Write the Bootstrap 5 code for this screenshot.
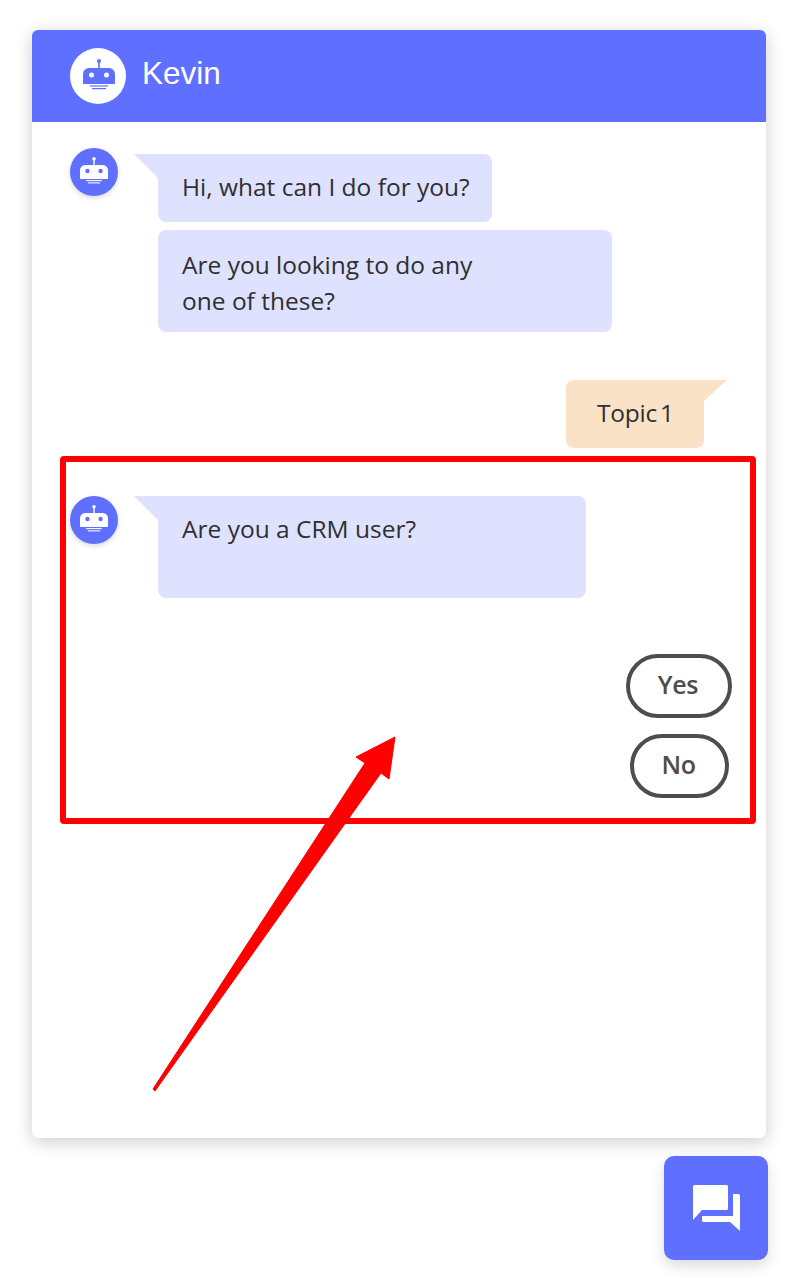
<!DOCTYPE html>
<html lang="en">
<head>
  <meta charset="UTF-8" />
  <meta name="viewport" content="width=device-width, initial-scale=1.0"/>
  <title>Kevin chat</title>
  <link href="https://cdn.jsdelivr.net/npm/bootstrap@5.3.3/dist/css/bootstrap.min.css" rel="stylesheet" />
  <style>
    body {
      background: #fff;
      font-family: "Open Sans", "Noto Sans", sans-serif;
      color: #2f2f33;
      overflow: hidden;
    }
    .page-wrap {
      position: relative;
      width: 790px;
      height: 1278px;
      padding: 30px 24px 0 32px;
    }
    .chat-card {
      height: 1108px;
      border: 0;
      border-radius: 6px;
      box-shadow: 0 4px 18px rgba(0,0,0,0.2);
    }
    .chat-head {
      height: 92px;
      background: #5f6fff;
      color: #fff;
      padding-left: 38px;
      border-radius: 6px 6px 0 0;
      font-family: "Liberation Sans", Arial, sans-serif;
      font-size: 31.5px;
      gap: 16px;
    }
    .chat-name { padding-bottom: 4px; }
    .head-avatar {
      width: 56px;
      height: 56px;
      background: #fff;
      color: #5f6fff;
    }
    .head-avatar svg { margin: 0 0 2px 2px; }
    .bot-avatar {
      width: 48px;
      height: 48px;
      background: #5f6fff;
      color: #fff;
      box-shadow: 0 2px 5px rgba(0,0,0,0.15);
      flex: none;
    }
    .bot-avatar svg { margin-bottom: 2px; }
    .chat-rows { padding-left: 38px; padding-top: 26px; }
    .bot-group { gap: 40px; }
    .msg-stack { gap: 8px; padding-top: 6px; }
    .bubble {
      position: relative;
      background: #dfe2fe;
      border-radius: 8px;
      padding: 17px 24px;
      font-size: 24.5px;
      line-height: 36px;
    }
    .bubble-hi { width: 334px; height: 68px; border-top-left-radius: 0; padding: 0 0 3px 24px; white-space: nowrap; }
    .bubble-look { width: 454px; height: 102px; }
    .bubble-crm { width: 428px; height: 102px; border-top-left-radius: 0; padding-top: 15px; }
    .bubble-tail::before {
      content: "";
      position: absolute;
      left: -24px;
      top: 0;
      border-top: 24px solid #dfe2fe;
      border-left: 24px solid transparent;
    }
    .user-row { margin-top: 48px; padding-right: 62px; }
    .bubble-user {
      width: 138px;
      height: 68px;
      background: #f9e2c6;
      border-top-right-radius: 0;
      text-align: center;
      padding: 15px 0 15px 1px;
      letter-spacing: -0.25px;
      word-spacing: -3px;
    }
    .bubble-user::after {
      content: "";
      position: absolute;
      right: -23px;
      top: 0;
      border-top: 21px solid #f9e2c6;
      border-right: 23px solid transparent;
    }
    .red-box {
      margin: 8px 10px 0 28px;
      height: 368px;
      border: 6px solid #ff0000;
      border-radius: 4px;
      padding: 34px 0 0 4px;
    }
    .reply-list { margin-top: 56px; gap: 16px; padding-right: 18px; }
    .reply-btn {
      height: 64px;
      border: 4px solid #4d4d4d;
      border-radius: 32px;
      background: #fff;
      color: #4d4d4d;
      font-size: 25px;
      font-weight: 600;
      line-height: 1;
      padding: 0 2px 4px 0;
      letter-spacing: -0.3px;
    }
    .reply-yes { width: 106px; }
    .reply-no { width: 99px; margin-right: 3px; }
    .fab-row { margin-top: 18px; }
    .fab {
      width: 104px;
      height: 104px;
      margin-right: -2px;
      background: #5f6fff;
      color: #fff;
      border: 0;
      border-radius: 10px;
      box-shadow: 0 6px 14px rgba(0,0,0,0.14);
    }
    .fab:hover { background: #5f6fff; color: #fff; }
    .note-arrow {
      position: absolute;
      left: 0;
      top: 0;
      pointer-events: none;
    }
  </style>
</head>
<body>
  <svg width="0" height="0" class="d-block position-absolute">
    <symbol id="botIcon" viewBox="0 0 32 32">
      <circle cx="16" cy="2" r="2"/>
      <rect x="15.200" y="3" width="1.600" height="6"/>
      <path fill-rule="evenodd" d="M6 9h20a6 6 0 0 1 6 6v9.200a.8.8 0 0 1-.8.8H.8a.8.8 0 0 1-.8-.8V15a6 6 0 0 1 6-6zM8.500 13.500a2.500 2.500 0 1 0 0 5a2.500 2.500 0 0 0 0-5zM23.500 13.500a2.500 2.500 0 1 0 0 5a2.500 2.500 0 0 0 0-5z"/>
      <rect x="7" y="26.400" width="18" height="1.200"/>
      <rect x="9" y="29" width="14" height="1.200"/>
    </symbol>
  </svg>

  <div class="page-wrap">
    <div class="card chat-card">
      <!-- Header -->
      <div class="chat-head d-flex align-items-center">
        <span class="head-avatar rounded-circle d-flex align-items-center justify-content-center">
          <svg width="32" height="32" fill="currentColor"><use href="#botIcon"/></svg>
        </span>
        <span class="chat-name">Kevin</span>
      </div>

      <!-- Greeting -->
      <div class="chat-rows">
        <div class="bot-group d-flex">
          <span class="bot-avatar rounded-circle d-flex align-items-center justify-content-center">
            <svg width="28" height="28" fill="currentColor"><use href="#botIcon"/></svg>
          </span>
          <div class="msg-stack d-flex flex-column">
            <div class="bubble bubble-tail bubble-hi d-flex align-items-center">Hi, what can I do for you?</div>
            <div class="bubble bubble-look">Are you looking to do any<br>one of these?</div>
          </div>
        </div>
      </div>

      <div class="user-row d-flex justify-content-end">
        <div class="bubble bubble-user">Topic 1</div>
      </div>

      <!-- Highlighted question -->
      <div class="red-box">
        <div class="bot-group d-flex">
          <span class="bot-avatar rounded-circle d-flex align-items-center justify-content-center">
            <svg width="28" height="28" fill="currentColor"><use href="#botIcon"/></svg>
          </span>
          <div class="bubble bubble-tail bubble-crm">Are you a CRM user?</div>
        </div>
        <div class="reply-list d-flex flex-column align-items-end">
          <button class="btn reply-btn reply-yes">Yes</button>
          <button class="btn reply-btn reply-no">No</button>
        </div>
      </div>
    </div>

    <div class="fab-row d-flex justify-content-end">
      <button class="btn fab d-flex align-items-center justify-content-center p-0">
        <svg width="48" height="48" viewBox="0 0 48 48" fill="currentColor">
          <path d="M1 2.500a1.500 1.500 0 0 1 1.500-1.500h32a1.500 1.500 0 0 1 1.500 1.500v22a1.500 1.500 0 0 1-1.500 1.500H10l-9 10z"/>
          <path d="M41 10h5.500a1.500 1.500 0 0 1 1.500 1.500V47l-10-9H11.500a1.500 1.500 0 0 1-1.500-1.500V32h31z"/>
        </svg>
      </button>
    </div>

    <!-- Annotation arrow -->
    <svg class="note-arrow" width="790" height="1278" viewBox="0 0 790 1278">
      <polygon points="395,737 389,779 381,773 155,1091 153,1089 365,763 356,757" fill="#ff0000" stroke="#ff0000" stroke-width="1" stroke-linejoin="round"/>
    </svg>
  </div>

  <script src="https://cdn.jsdelivr.net/npm/bootstrap@5.3.3/dist/js/bootstrap.bundle.min.js"></script>
</body>
</html>
